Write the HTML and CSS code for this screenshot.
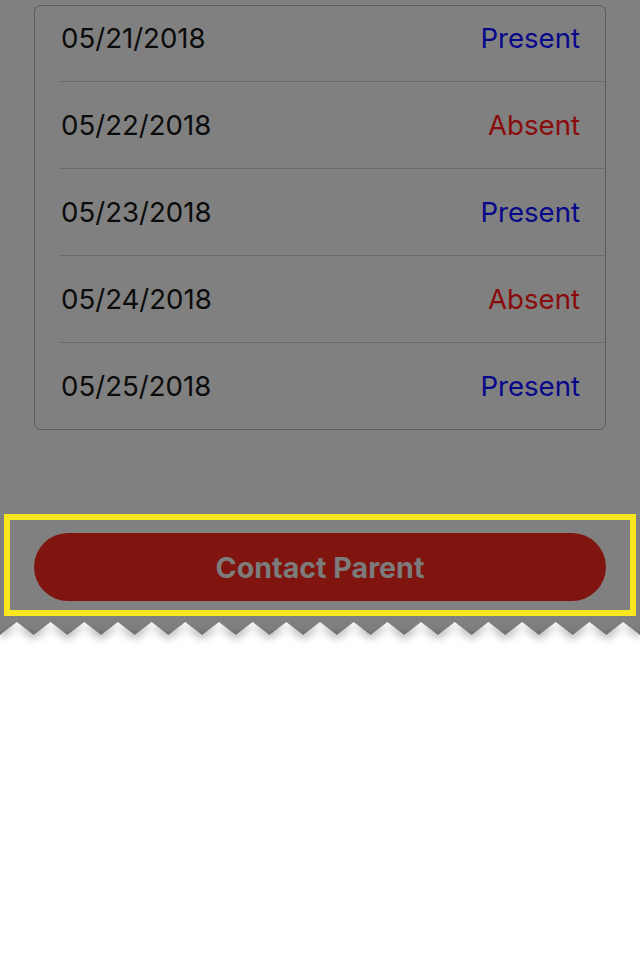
FILE: index.html
```html
<!DOCTYPE html>
<html lang="en">
<head>
<meta charset="utf-8">
<title>Attendance</title>
<link rel="stylesheet" href="styles.css">
</head>
<body>
<div class="page">
  <section class="screen">
    <div class="card">
      <ul class="list">
        <li class="row"><span class="date">05/21/2018</span><span class="status present">Present</span></li>
        <li class="row"><span class="date">05/22/2018</span><span class="status absent">Absent</span></li>
        <li class="row"><span class="date">05/23/2018</span><span class="status present">Present</span></li>
        <li class="row"><span class="date">05/24/2018</span><span class="status absent">Absent</span></li>
        <li class="row"><span class="date">05/25/2018</span><span class="status present">Present</span></li>
      </ul>
    </div>
    <div class="actions">
      <button class="contact" type="button">Contact Parent</button>
      <div class="highlight"></div>
    </div>
  </section>
  <svg class="tear" width="640" height="34" viewBox="0 0 640 34" aria-hidden="true">
    <defs>
      <filter id="soft" x="-5%" y="-50%" width="110%" height="250%">
        <feGaussianBlur in="SourceAlpha" stdDeviation="4"/>
        <feOffset dy="4" result="b"/>
        <feFlood flood-color="#000" flood-opacity="0.3"/>
        <feComposite in2="b" operator="in" result="s"/>
        <feMerge><feMergeNode in="s"/><feMergeNode in="SourceGraphic"/></feMerge>
      </filter>
      <linearGradient id="shade" x1="0" y1="0" x2="0" y2="1">
        <stop offset="0" stop-color="#808080"/>
        <stop offset="0.5" stop-color="#7d7d7d"/>
        <stop offset="1" stop-color="#6e6e6e"/>
      </linearGradient>
    </defs>
    <g filter="url(#soft)">
      <polygon class="teeth" points="0,0 640,0 640,13 623.16,0 606.32,13 589.47,0 572.63,13 555.79,0 538.95,13 522.1,0 505.26,13 488.42,0 471.58,13 454.74,0 437.89,13 421.05,0 404.21,13 387.37,0 370.53,13 353.68,0 336.84,13 320,0 303.16,13 286.32,0 269.47,13 252.63,0 235.79,13 218.95,0 202.1,13 185.26,0 168.42,13 151.58,0 134.74,13 117.89,0 101.05,13 84.21,0 67.37,13 50.53,0 33.68,13 16.84,0 0,13"/>
    </g>
  </svg>
  <div class="blank"></div>
</div>
</body>
</html>
```

FILE: styles.css
```css
* { box-sizing: border-box; }

html, body {
  margin: 0;
  padding: 0;
  background: #ffffff;
}

body {
  font-family: Inter, "Noto Sans", "Liberation Sans", sans-serif;
  width: 640px;
  height: 960px;
  overflow: hidden;
}

.screen {
  background: #808080;
  padding: 5px 0 21px;
}

.card {
  margin: 0 34px;
  border: 1px solid #5b5b5b;
  border-radius: 7px;
  overflow: hidden;
}

.list {
  list-style: none;
  margin: -11px 0 0;
  padding: 0;
}

.row {
  display: flex;
  align-items: center;
  justify-content: space-between;
  height: 87px;
  margin-left: 25px;
  padding: 0 25px 0 1px;
  border-bottom: 1px solid #6b6b6b;
}

.row:last-child {
  border-bottom: none;
  height: 86px;
}

.date {
  font-size: 27.6px;
  color: #0b0b0b;
}

.status {
  font-size: 27.6px;
}

.present { color: #07078a; }
.absent  { color: #8a0b0b; }

.actions {
  position: relative;
  margin-top: 103px;
  padding: 0 34px;
}

.contact {
  display: block;
  width: 100%;
  height: 68px;
  border: none;
  border-radius: 34px;
  background: #80150f;
  color: #7c7c7c;
  font-family: Inter, "Noto Sans", "Liberation Sans", sans-serif;
  font-weight: 700;
  font-size: 28.6px;
  padding: 0;
}

.highlight {
  position: absolute;
  left: 4px;
  right: 4px;
  top: -19px;
  height: 102px;
  border: 6px solid #f8e61f;
  pointer-events: none;
}

.tear {
  display: block;
}

.teeth {
  fill: url(#shade);
}
```
